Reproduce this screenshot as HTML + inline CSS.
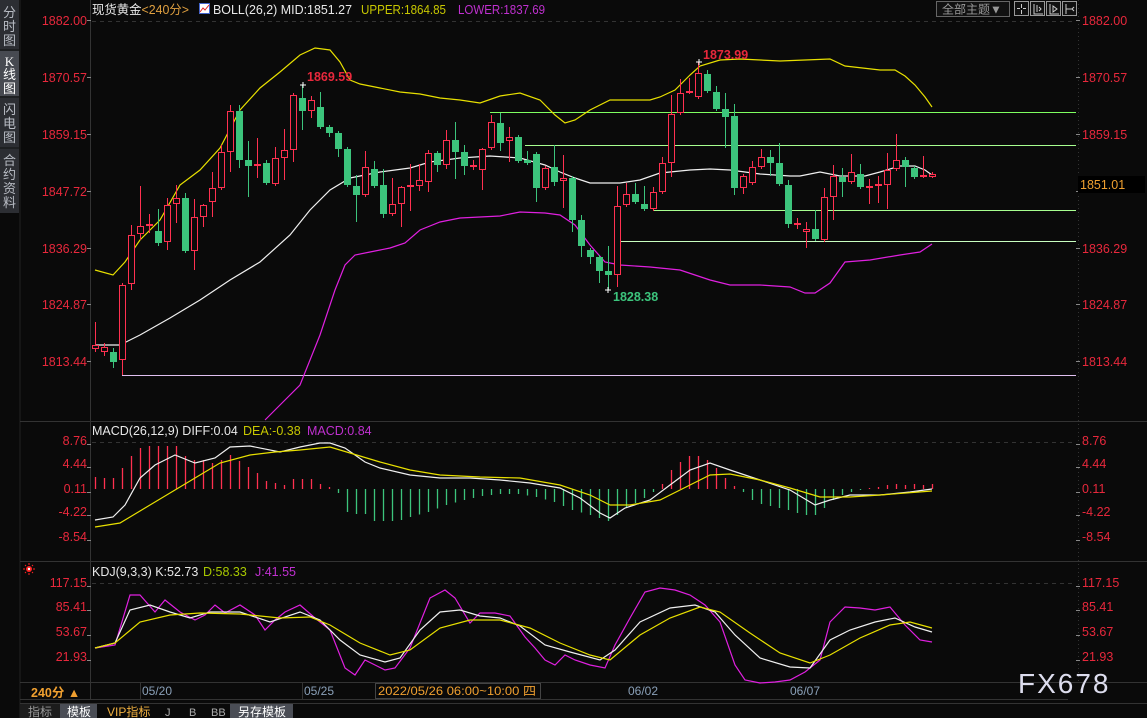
<!DOCTYPE html>
<html><head><meta charset="utf-8"><style>
body{margin:0;width:1147px;height:718px;background:#0a0a0a;overflow:hidden;font-family:"Liberation Sans","Noto Sans CJK SC",sans-serif}
svg{position:absolute;left:0;top:0}
</style></head><body>
<svg id="s" width="1147" height="718" xmlns="http://www.w3.org/2000/svg" font-family="Liberation Sans, Noto Sans CJK SC, sans-serif">
<rect width="1147" height="718" fill="#0a0a0a"/>
<!-- sidebar -->
<rect x="0" y="0" width="19" height="213" fill="#2c2e33"/>
<rect x="0" y="51" width="19" height="45" fill="#474a51"/>
<line x1="0" y1="50" x2="19" y2="50" stroke="#111"/><line x1="0" y1="97" x2="19" y2="97" stroke="#111"/><line x1="0" y1="148" x2="19" y2="148" stroke="#111"/>
<g fill="#b8bcc4" font-size="13" text-anchor="middle">
<text x="9.5" y="17">分</text><text x="9.5" y="31">时</text><text x="9.5" y="45">图</text>
<text x="9.5" y="66" fill="#fff" font-family="Liberation Serif, serif">K</text><text x="9.5" y="79" fill="#fff">线</text><text x="9.5" y="93" fill="#fff">图</text>
<text x="9.5" y="114">闪</text><text x="9.5" y="128">电</text><text x="9.5" y="142">图</text>
<text x="9.5" y="165">合</text><text x="9.5" y="179">约</text><text x="9.5" y="193">资</text><text x="9.5" y="207">料</text>
</g>
<line x1="20" y1="0" x2="20" y2="718" stroke="#222"/>
<!-- frames -->
<g stroke="#333" stroke-width="1">
<line x1="90.5" y1="0" x2="90.5" y2="700"/>
<line x1="20" y1="421.5" x2="1147" y2="421.5"/>
<line x1="20" y1="561.5" x2="1147" y2="561.5"/>
<line x1="20" y1="682.5" x2="1147" y2="682.5"/>
<line x1="20" y1="699.5" x2="1068" y2="699.5"/>
<line x1="20" y1="703.5" x2="1147" y2="703.5"/>
</g>
<line x1="1078.5" y1="0" x2="1078.5" y2="682" stroke="#333" stroke-dasharray="1,3"/>
<g stroke="#333" stroke-dasharray="4,4">
<line x1="92" y1="21.5" x2="1076" y2="21.5"/>
<line x1="92" y1="442.5" x2="1076" y2="442.5"/>
<line x1="92" y1="583.5" x2="1076" y2="583.5"/>
</g>
<!-- headers -->
<text x="92" y="14" font-size="12.5" fill="#e8e8e8" textLength="97" lengthAdjust="spacingAndGlyphs">现货黄金<tspan fill="#e0a040">&lt;240分&gt;</tspan></text>
<rect x="199.5" y="3.5" width="10" height="10" fill="#fff" stroke="#46c"/><path d="M200 12 L203 8 L205 10 L209 5" stroke="#d22" fill="none"/>
<text x="213" y="14" font-size="12.5" fill="#e8e8e8" textLength="139" lengthAdjust="spacingAndGlyphs">BOLL(26,2) MID:1851.27</text>
<text x="361" y="14" font-size="12.5" fill="#c8c800" textLength="85" lengthAdjust="spacingAndGlyphs">UPPER:1864.85</text>
<text x="458" y="14" font-size="12.5" fill="#c030d0" textLength="87" lengthAdjust="spacingAndGlyphs">LOWER:1837.69</text>
<rect x="936.5" y="1.5" width="73" height="15" fill="#111" stroke="#666"/>
<text x="942" y="13.5" font-size="12" fill="#999">全部主题▼</text>
<g fill="#111" stroke="#999">
<rect x="1014.5" y="1.5" width="14" height="14"/><rect x="1030.5" y="1.5" width="14" height="14"/><rect x="1046.5" y="1.5" width="14" height="14"/><rect x="1062.5" y="1.5" width="14" height="14"/>
</g>
<g stroke="#ccc" fill="none">
<path d="M1021.5 4v4M1021.5 10v4M1017 8.5h3M1023 8.5h3"/>
<path d="M1034 4v10h9M1037 5v7M1039 7l2 2-2 2"/>
<path d="M1050 4v10h9M1053 6l4 3-4 3z"/>
<path d="M1066 4v10M1066 9h6l2-2M1072 9l2 2"/>
</g>
<text x="92" y="435" font-size="12.5" fill="#e8e8e8">MACD(26,12,9) DIFF:0.04</text>
<text x="243" y="435" font-size="12.5" fill="#c8c800">DEA:-0.38</text>
<text x="307" y="435" font-size="12.5" fill="#c030d0">MACD:0.84</text>
<text x="92" y="576" font-size="12.5" fill="#e8e8e8">KDJ(9,3,3) K:52.73</text>
<text x="203" y="576" font-size="12.5" fill="#a8c800">D:58.33</text>
<text x="255" y="576" font-size="12.5" fill="#c030d0">J:41.55</text>
<circle cx="29" cy="569" r="3" fill="#f22"/><circle cx="29" cy="569" r="1.2" fill="#fff"/>
<g stroke="#f22" stroke-width="1"><path d="M23 569h2M33 569h2M29 563v2M29 573v2M25 565l1 1M32 572l1 1M33 565l-1 1M25 573l1-1"/></g>
<!-- axis labels -->
<g font-size="12.5" fill="#e8283c" id="ax"></g>
<g id="plot"></g>
<!-- current price -->
<rect x="1078" y="176" width="67" height="17" fill="#000"/>
<text x="1080" y="189" font-size="12.5" fill="#f0a030">1851.01</text>
<!-- annotations -->
<text x="307" y="81" font-size="12.5" font-weight="bold" fill="#e8283c">1869.59</text>
<text x="703" y="59" font-size="12.5" font-weight="bold" fill="#e8283c">1873.99</text>
<text x="613" y="301" font-size="12.5" font-weight="bold" fill="#3cc47c">1828.38</text>
<g stroke="#fff"><path d="M300 85h6M303 82v6M696 62h6M699 59v6M605 290h6M608 287v6"/></g>
<!-- bottom axis -->
<text x="31" y="697" font-size="12.5" font-weight="bold" fill="#f0a030">240分 ▲</text>
<g font-size="12" fill="#8aa0b8"><text x="142" y="695">05/20</text><text x="304" y="695">05/25</text><text x="628" y="695">06/02</text><text x="790" y="695">06/07</text></g>
<line x1="140.5" y1="683" x2="140.5" y2="699" stroke="#333"/><line x1="302.5" y1="683" x2="302.5" y2="699" stroke="#333"/>
<rect x="375.5" y="683.5" width="165" height="15" fill="#0a0a0a" stroke="#444"/>
<text x="378" y="695" font-size="12" fill="#f0a030" textLength="158" lengthAdjust="spacingAndGlyphs">2022/05/26 06:00~10:00 四</text>
<!-- tabs -->
<rect x="20" y="704" width="40" height="14" fill="#1c1c1c"/><text x="28" y="716" font-size="12" fill="#999">指标</text>
<rect x="60" y="704" width="37" height="14" fill="#4a4d55"/><text x="67" y="716" font-size="12" fill="#fff">模板</text>
<text x="107" y="716" font-size="12" fill="#f0b040">VIP指标</text>
<text x="165" y="716" font-size="11" fill="#aaa">J</text><text x="189" y="716" font-size="11" fill="#aaa">B</text><text x="211" y="716" font-size="11" fill="#aaa">BB</text>
<rect x="230" y="704" width="63" height="14" fill="#4a4d55"/><text x="238" y="716" font-size="12" fill="#fff">另存模板</text>
<text x="1018" y="693" font-size="28" fill="#dde" letter-spacing="2">FX678</text>
</svg>
<script>
var NS="http://www.w3.org/2000/svg",P=document.getElementById('plot'),AX=document.getElementById('ax');
function el(t,a,p){var e=document.createElementNS(NS,t);for(var k in a)e.setAttribute(k,a[k]);(p||P).appendChild(e);return e;}
function txt(x,y,s,anchor){var e=el('text',{x:x,y:y,'text-anchor':anchor||'start'},AX);e.textContent=s;}
var L=[["1882.00",21],["1870.57",78],["1859.15",135],["1847.72",192],["1836.29",249],["1824.87",305],["1813.44",362],["8.76",445],["4.44",468],["0.11",493],["-4.22",516],["-8.54",541],["117.15",587],["85.41",611],["53.67",636],["21.93",661]];
L.forEach(function(l){var y=l[1]+(l[1]<400?4:0);txt(87,y,l[0],'end');if(l[0]!="1847.72")txt(1082,y,l[0]);el('line',{x1:1076,y1:l[1]-0.5,x2:1080,y2:l[1]-0.5,stroke:'#888'});el('line',{x1:87,y1:l[1]-0.5,x2:91,y2:l[1]-0.5,stroke:'#888'});});
[[490,112,'#7fff60'],[525,145,'#a8ff90'],[653,210,'#a8ff90'],[620,241,'#c8ffc0'],[122,375,'#e0c0f0']].forEach(function(h){el('line',{x1:h[0],y1:h[1]+.5,x2:1076,y2:h[1]+.5,stroke:h[2],'stroke-width':1});});
function pl(pts,c){el('polyline',{points:pts.map(function(p){return p.join(',')}).join(' '),fill:'none',stroke:c,'stroke-width':1.2});}
pl([[95,270],[113,275],[125,262],[140,240],[160,220],[180,185],[200,170],[220,148],[240,110],[260,88],[280,72],[300,55],[315,48],[330,50],[340,62],[350,80],[360,84],[380,88],[400,92],[420,94],[440,98],[460,100],[480,103],[500,96],[520,93],[540,100],[555,115],[565,123],[575,120],[590,110],[610,100],[650,100],[660,97],[675,90],[690,75],[700,66],[720,60],[740,59],[780,61],[830,59],[845,66],[880,70],[895,70],[905,76],[915,85],[925,97],[932,107]],'#e8e000');
pl([[95,345],[120,345],[140,335],[170,318],[200,300],[230,280],[260,262],[290,235],[310,210],[330,190],[350,178],[380,172],[410,168],[430,162],[460,158],[490,156],[520,158],[545,165],[560,172],[575,178],[590,183],[605,183],[620,183],[640,180],[660,173],[690,170],[710,169],[730,170],[760,174],[790,176],[800,176],[820,172],[840,176],[865,176],[880,172],[900,166],[915,166],[925,170],[932,175]],'#f0f0f0');
pl([[265,420],[280,405],[300,385],[320,335],[335,290],[345,265],[355,255],[370,252],[390,248],[405,243],[420,230],[440,222],[460,218],[500,216],[520,212],[545,213],[560,215],[575,225],[590,245],[605,262],[620,265],[650,267],[680,270],[710,280],[730,285],[760,285],[790,287],[805,293],[815,293],[830,283],[845,262],[870,260],[900,255],[920,252],[932,244]],'#e020e0');
var C=[[95,349,345,322,352],[104,352,347,343,356],[113,352,362,348,368],[122,360,285,283,375],[131,284,235,225,290],[140,234,226,186,240],[149,225,225,214,233],[158,231,243,209,246],[167,242,205,198,250],[176,204,198,185,223],[185,198,251,193,253],[194,251,217,199,270],[203,217,205,204,227],[212,202,188,172,217],[221,188,152,145,190],[230,152,111,105,172],[239,111,160,105,168],[248,160,166,141,197],[257,165,165,138,178],[266,163,183,160,185],[275,184,158,147,186],[284,158,150,129,180],[293,150,95,93,162],[302,98,111,85,130],[311,111,100,96,118],[320,107,127,92,129],[329,127,133,125,137],[338,133,149,131,157],[347,149,185,147,187],[356,186,195,175,222],[365,195,167,151,197],[374,169,186,161,188],[383,185,214,169,218],[392,214,204,178,216],[401,204,187,186,227],[410,186,186,164,211],[419,186,180,164,191],[428,182,153,150,192],[437,153,165,151,172],[446,165,140,130,169],[455,140,152,122,179],[464,152,166,145,175],[473,166,166,160,170],[482,170,149,148,190],[491,148,122,115,150],[500,123,143,113,151],[509,141,137,127,162],[518,137,161,135,163],[527,160,163,151,165],[536,154,188,152,202],[545,188,168,166,190],[554,167,182,145,186],[563,181,178,155,208],[572,178,220,176,232],[581,220,246,215,257],[590,250,257,248,264],[599,257,271,255,283],[608,271,275,246,290],[617,275,206,186,287],[626,205,194,183,207],[635,194,202,183,204],[644,204,209,186,211],[653,209,192,187,211],[662,192,163,157,194],[671,163,114,95,177],[680,113,93,79,115],[689,92,92,78,94],[698,97,73,62,99],[707,74,91,70,93],[716,92,109,86,111],[725,109,117,93,148],[734,116,188,104,195],[743,188,176,174,194],[752,183,167,161,185],[761,167,157,149,169],[770,157,163,150,176],[779,163,184,143,186],[788,185,224,180,228],[797,224,224,218,229],[806,232,229,222,248],[815,229,239,210,241],[824,240,197,188,242],[833,197,176,165,220],[842,177,182,168,197],[851,182,172,154,184],[860,174,187,164,189],[869,187,187,179,204],[878,185,185,176,203],[887,185,170,153,209],[896,169,160,134,171],[905,160,167,157,187],[914,168,177,166,179],[923,177,176,156,178],[932,177,174,172,178]];
C.forEach(function(c){var x=c[0],o=c[1],cl=c[2],up=cl<o||(cl==o&&x!=158);var top=Math.min(o,cl),bot=Math.max(o,cl);
var col=up?'#ff3050':'#3cc47c';
el('line',{x1:x+.5,y1:c[3],x2:x+.5,y2:top,stroke:col});el('line',{x1:x+.5,y1:bot,x2:x+.5,y2:c[4],stroke:col});
if(bot-top<2){el('rect',{x:x-3,y:top-1,width:7,height:2,fill:col});}
else if(up)el('rect',{x:x-2.5,y:top+.5,width:6,height:bot-top-1,fill:'#0a0a0a',stroke:col});
else el('rect',{x:x-3,y:top,width:7,height:bot-top,fill:col});});
var M=[[95,477],[104,478],[113,478],[122,468],[131,456],[140,448],[149,446],[158,446],[167,446],[176,446],[185,456],[194,460],[203,460],[212,463],[221,460],[230,455],[239,461],[248,467],[257,473],[266,481],[275,483],[284,485],[293,479],[302,479],[311,479],[320,484],[329,487],[338,493],[347,512],[356,514],[365,514],[374,521],[383,521],[392,521],[401,520],[410,517],[428,512],[446,505],[464,500],[482,496],[500,494],[518,494],[536,497],[554,502],[572,510],[590,515],[608,521],[617,515],[626,508],[635,503],[644,498],[653,492],[662,484],[671,470],[680,462],[689,456],[698,456],[707,460],[716,468],[725,478],[734,486],[743,492],[752,500],[761,504],[770,506],[779,508],[788,510],[797,513],[806,515],[815,515],[824,508],[833,500],[842,495],[851,492],[860,490],[869,488],[878,487],[887,485],[896,484],[905,485],[914,484],[923,485],[932,484]];
function interp(x){for(var i=0;i<M.length-1;i++){if(x>=M[i][0]&&x<=M[i+1][0]){var t=(x-M[i][0])/(M[i+1][0]-M[i][0]);return M[i][1]+t*(M[i+1][1]-M[i][1]);}}return 489;}
for(var x=95;x<=932;x+=9){var y=interp(x);el('line',{x1:x+.5,y1:489,x2:x+.5,y2:y,stroke:y<489?'#ff3050':'#3cc47c','stroke-width':1.3});}
pl([[95,520],[113,517],[125,505],[140,478],[155,465],[175,455],[195,463],[215,458],[230,447],[250,446],[280,452],[300,447],[320,443],[330,443],[345,448],[365,462],[380,468],[410,475],[440,478],[470,478],[500,480],[530,483],[560,488],[580,498],[600,513],[610,518],[625,508],[650,500],[670,485],[690,470],[710,463],[730,470],[760,480],[790,490],[815,505],[830,500],[850,495],[880,495],[910,492],[932,489]],'#f0f0f0');
pl([[95,527],[120,523],[150,505],[175,490],[200,475],[220,463],[250,455],[275,452],[300,450],[330,447],[350,453],[380,462],[410,470],[440,475],[480,477],[520,478],[560,485],[590,495],[610,505],[630,505],[660,500],[690,485],[710,475],[730,474],[760,480],[790,488],[820,497],[850,497],[880,495],[932,491]],'#e8e000');
pl([[95,648],[115,645],[130,595],[140,595],[155,612],[165,600],[180,612],[195,620],[205,615],[215,605],[225,613],[240,605],[255,615],[265,630],[275,620],[285,612],[300,605],[315,618],[330,630],[345,668],[355,675],[365,660],[375,665],[385,670],[395,668],[410,648],[430,598],[445,590],[455,598],[470,623],[480,613],[495,613],[510,616],[525,637],[535,648],[545,660],[555,665],[565,655],[575,660],[590,665],[605,668],[615,645],[630,618],[645,592],[660,588],[675,590],[690,595],[705,605],[720,622],[735,665],[745,680],[760,683],[775,682],[790,680],[805,672],[820,660],[830,622],[845,607],[860,608],[875,610],[890,607],[905,625],[920,640],[932,642]],'#e020e0');
pl([[95,648],[115,643],[130,610],[150,605],[170,612],[190,618],[210,612],[240,612],[270,622],[300,612],[320,620],[340,640],[360,655],[385,662],[400,658],[420,630],[440,612],[460,610],[480,616],[500,618],[520,626],[545,645],[570,652],[600,660],[615,650],[640,622],[670,608],[695,605],[715,612],[735,635],[760,658],[790,667],[810,668],[830,640],[850,630],[875,622],[895,618],[915,627],[932,632]],'#f0f0f0');
pl([[95,648],[115,643],[140,622],[170,615],[200,613],[240,614],[280,618],[310,617],[330,625],[360,643],[390,655],[410,650],[440,628],[470,620],[500,620],[530,628],[560,643],[590,655],[610,660],[640,635],[670,618],[700,607],[720,612],[750,633],[780,653],[810,663],[830,655],[860,638],[890,625],[910,622],[932,628]],'#e8e000');
</script>
</body></html>
